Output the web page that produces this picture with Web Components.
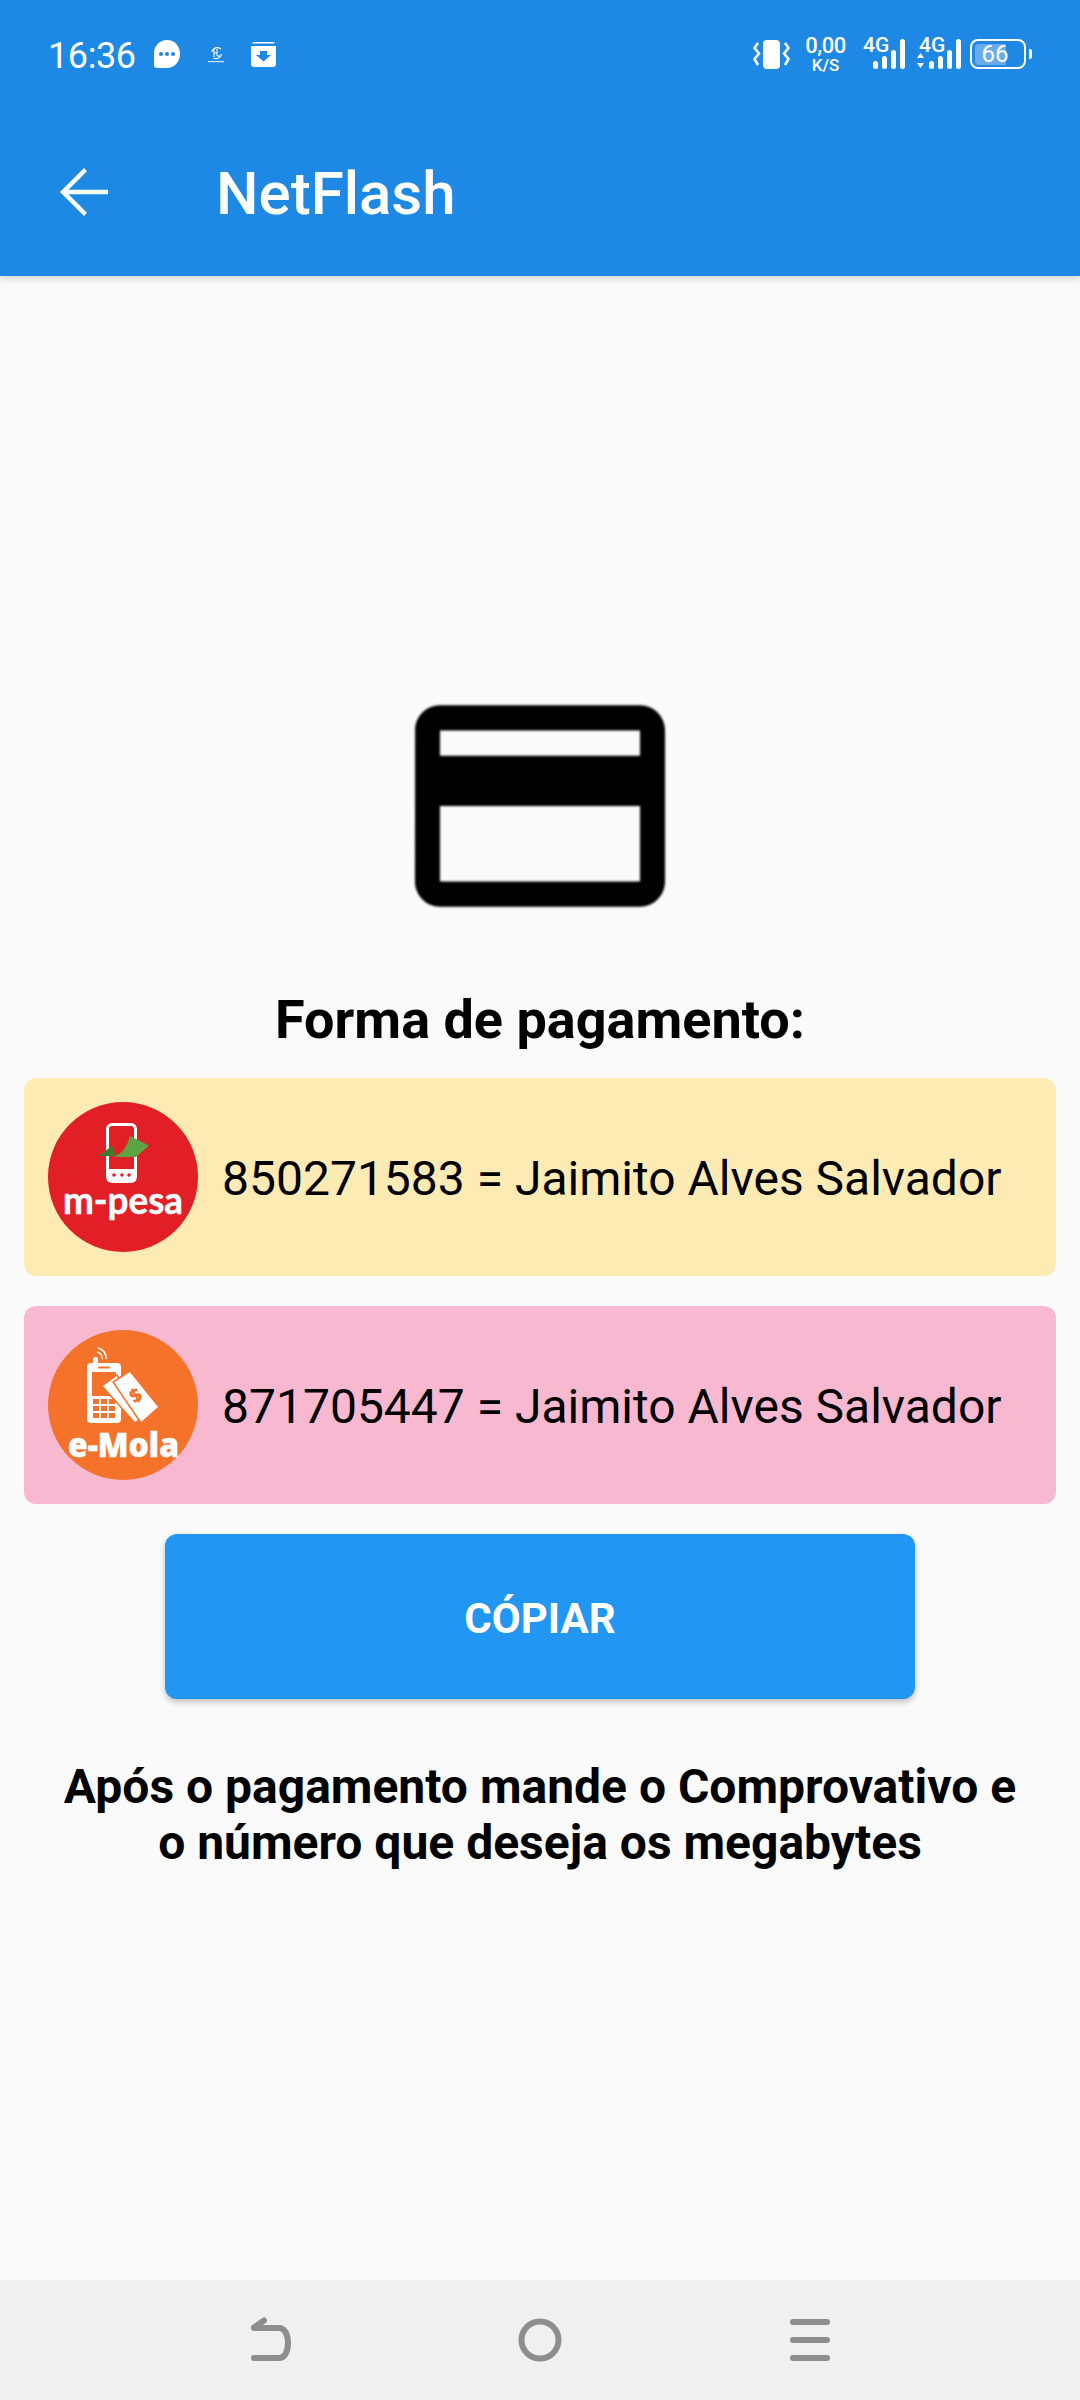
<!DOCTYPE html>
<html lang="pt"><head><meta charset="utf-8"><title>NetFlash</title>
<style>
html,body{margin:0;padding:0;background:#fafafa}
body{width:1080px;height:2400px;font-family:Roboto,"Noto Sans",sans-serif;color:#000;overflow:hidden}
app-screen{height:2400px}
</style></head><body>
<app-screen>
  <app-bar slot="top" title="NetFlash"></app-bar>
  <pay-icon></pay-icon>
  <h-title>Forma de pagamento:</h-title>
  <pay-card color="#feebb3"><mpesa-logo slot="logo"></mpesa-logo>850271583 = Jaimito Alves Salvador</pay-card>
  <pay-card color="#f8b9d0" class="second"><emola-logo slot="logo"></emola-logo>871705447 = Jaimito Alves Salvador</pay-card>
  <copy-button>CÓPIAR</copy-button>
  <note-text>Após o pagamento mande o Comprovativo e<br>o número que deseja os megabytes</note-text>
  <nav-bar slot="bottom"></nav-bar>
</app-screen>
<script>
function def(name, html, setup){
  customElements.define(name, class extends HTMLElement{
    constructor(){super();const r=this.attachShadow({mode:'open'});r.innerHTML=html;if(setup)setup(this,r);}
  });
}
def('app-screen',`<style>:host{display:flex;flex-direction:column;width:1080px;background:#fafafa}
main{flex:1;display:flex;flex-direction:column;align-items:center;padding-top:379px;min-height:0}</style>
<slot name="top"></slot><main><slot></slot></main><slot name="bottom"></slot>`);

def('status-bar',`<style>
:host{display:flex;align-items:center;height:108px;box-sizing:border-box;padding:0 48px 0 48px;color:#fff;font-family:Roboto,sans-serif}
.left,.right{display:flex;align-items:center}
.sp{flex:1}
.time{font-size:36px;line-height:48px;font-weight:400;width:88px;white-space:nowrap;letter-spacing:-.4px;margin-top:3px}
svg{display:block;flex:none}
.speed{display:flex;flex-direction:column;align-items:center;width:39px;margin:0 18px 0 16px;font-weight:500;color:#fff}
.speed b{font-weight:500;font-size:22px;line-height:21px;letter-spacing:-.5px}
.speed i{font-style:normal;font-size:17px;line-height:16px;margin-top:1px}
.g{font-size:21px;font-weight:500;line-height:20px;white-space:nowrap}
.net{display:flex;align-items:flex-start;position:relative;height:34px}
.net .g{width:24px;margin-top:-2px}
.bat{display:flex;align-items:center;margin-left:9px}
.batbox{box-sizing:border-box;width:56px;height:30px;border:2.5px solid #fff;border-radius:8px;padding:2.5px;display:flex}
.fill{width:31px;background:#6aabee;border-radius:3px 0 0 3px;height:100%;position:relative}
.pct{font-size:24px;line-height:20px;font-weight:400;width:100%;white-space:nowrap;padding-left:7px;box-sizing:border-box}
.nub{width:3px;height:10px;background:#fff;border-radius:0 2px 2px 0;margin-left:3px}
</style>
<div class="left">
  <span class="time">16:36</span>
  <svg width="26" height="28" viewBox="0 0 26 28" style="margin-left:18px"><path d="M13 0C5.800 0 0 5.600 0 13v12c0 1.700 1.100 3 3 3h10c7.200 0 13-6 13-14S20.200 0 13 0z" fill="#fff"/><circle cx="7" cy="14" r="2" fill="#1e88e5"/><circle cx="13" cy="14" r="2" fill="#1e88e5"/><circle cx="19" cy="14" r="2" fill="#1e88e5"/></svg>
  <svg width="18" height="18" viewBox="0 0 18 18" style="margin-left:27px"><path d="M5 7a5.500 5.500 0 0 1 9-3M14.500 9a5.500 5.500 0 0 1-8 4" fill="none" stroke="#fff" stroke-width="1.200"/><path d="M7 4v8M10 4v7h3M7 8h3" stroke="#fff" stroke-width="1" fill="none"/><rect x="1" y="16" width="16" height="1.200" fill="#fff" opacity=".8"/></svg>
  <svg width="25" height="25" viewBox="0 0 25 25" style="margin-left:26px"><path d="M3 0h19a3 3 0 0 1 2 1.500H1A3 3 0 0 1 3 0z" fill="#fff"/><path d="M0 4h25v18a3 3 0 0 1-3 3H3a3 3 0 0 1-3-3z" fill="#fff"/><path d="M9 9h7v4h4l-7.500 6.500L5 13h4z" fill="#1e88e5"/></svg>
</div>
<div class="sp"></div>
<div class="right">
  <svg width="37" height="29" viewBox="0 0 37 29"><rect x="10" y="0" width="17" height="29" rx="4" fill="#fff"/><path d="M5 3L1.500 8 6 13.500 1.500 19 5 25M32 3l3.500 5L31 13.500 35.500 19 32 25" fill="none" stroke="#fff" stroke-width="2.600"/></svg>
  <div class="speed"><b>0,00</b><i>K/S</i></div>
  <div class="net"><span class="g">4G</span>
    <svg width="34" height="32" viewBox="0 0 34 32" style="margin:2px 0 0 -14px"><rect x="0" y="22" width="5" height="8" rx="2.500" fill="#fff"/><rect x="9" y="17" width="5" height="13" rx="2.500" fill="#fff"/><rect x="18" y="11" width="5" height="19" rx="2.500" fill="#fff"/><rect x="27" y="0" width="5" height="30" rx="2.500" fill="#fff"/></svg>
  </div>
  <div class="net" style="margin-left:12px"><span class="g" style="margin-left:0">4G</span>
    <svg width="44" height="32" viewBox="0 0 44 32" style="margin:2px 0 0 -26px"><path d="M0 19l3.500-5 3.500 5zM0 24l3.500 5 3.500-5z" fill="#fff"/><rect x="12" y="22" width="5" height="8" rx="2.500" fill="#fff"/><rect x="21" y="17" width="5" height="13" rx="2.500" fill="#fff"/><rect x="30" y="11" width="5" height="19" rx="2.500" fill="#fff"/><rect x="39" y="0" width="5" height="30" rx="2.500" fill="#fff"/></svg>
  </div>
  <div class="bat"><div class="batbox"><div class="fill"><div class="pct">66</div></div></div><div class="nub"></div></div>
</div>`);

def('app-bar',`<style>
:host{display:block;background:#1e88e5;color:#fff;box-shadow:0 2px 8px rgba(0,0,0,.18);position:relative;z-index:1}
.tool{height:168px;display:flex;align-items:center;padding-left:60px;box-sizing:border-box}
svg{display:block;flex:none}
.t{font-size:60px;font-weight:500;line-height:70px;margin:4px 0 0 108px;white-space:nowrap}
</style><status-bar></status-bar>
<div class="tool"><svg width="48" height="48" viewBox="0 0 48 48"><path d="M48 21.800H8.500L27 3.200 24 0 0 24l24 24 3-3.200L8.500 26.200H48z" fill="#fff"/></svg><span class="t"></span></div>`,
(h,r)=>{queueMicrotask(()=>{r.querySelector('.t').textContent=h.getAttribute('title')||'NetFlash'});});

def('pay-icon',`<style>:host{display:block;width:300px;height:302px}svg{display:block;filter:blur(.9px)}</style>
<svg width="300" height="302" viewBox="0 0 24 24" preserveAspectRatio="none"><path d="M20 4H4c-1.110 0-1.990.890-1.990 2L2 18c0 1.110.890 2 2 2h16c1.110 0 2-.890 2-2V6c0-1.110-.890-2-2-2zm0 14H4v-6h16v6zm0-10H4V6h16v2z" fill="#000"/></svg>`);

def('h-title',`<style>:host{display:block;font-size:54px;font-weight:700;line-height:60px;margin:33px 0 28px;text-align:center;white-space:nowrap}</style><slot></slot>`);

def('pay-card',`<style>:host{display:flex;align-items:center;box-sizing:border-box;width:1032px;height:198px;padding:24px;border-radius:12px;margin-bottom:30px;font-size:48px;line-height:56px;white-space:nowrap}
.logo{width:150px;height:150px;margin-right:24px;flex:none}
.txt{padding-top:3px}</style>
<div class="logo"><slot name="logo"></slot></div><div class="txt"><slot></slot></div>`,
(h)=>{queueMicrotask(()=>{h.style.background=h.getAttribute('color')});});

def('mpesa-logo',`<style>:host{display:block;width:150px;height:150px}svg{display:block}text{font-family:Lato,sans-serif;font-weight:700}</style>
<svg width="150" height="150" viewBox="0 0 150 150"><circle cx="75" cy="75" r="75" fill="#e21f26"/>
<rect x="59.500" y="22.500" width="28" height="57" rx="4.500" fill="none" stroke="#fff" stroke-width="3"/>
<rect x="59" y="67" width="29" height="13" rx="3" fill="#fff"/>
<circle cx="66" cy="73" r="1.800" fill="#e21f26"/><circle cx="74" cy="73" r="1.800" fill="#e21f26"/><circle cx="81" cy="73" r="1.800" fill="#e21f26"/>
<path d="M50 54L64 44l4 10z" fill="#3f7a2e"/>
<path d="M65 55c9-3 14-10 17-21l19 9.500-13 11.500z" fill="#5da344"/>
<text x="15" y="112" font-size="38" textLength="120" lengthAdjust="spacingAndGlyphs" fill="#fff" stroke="#fff" stroke-width=".5">m-pesa</text></svg>`);

def('emola-logo',`<style>:host{display:block;width:150px;height:150px}svg{display:block}text{font-family:"Open Sans",sans-serif;font-weight:800}</style>
<svg width="150" height="150" viewBox="0 0 150 150"><circle cx="75" cy="75" r="75" fill="#f4722a"/>
<rect x="45" y="27" width="5" height="8" rx="2" fill="#fff"/>
<path d="M49 22a6 6 0 0 1 5 7M50 18a10 10 0 0 1 8 11" fill="none" stroke="#fff" stroke-width="1.600"/>
<rect x="39" y="33" width="34" height="60" rx="4" fill="#fff"/>
<rect x="44" y="42" width="24" height="24" fill="#f4722a"/>
<rect x="50" y="36.500" width="12" height="2" rx="1" fill="#f4722a"/>
<g fill="#f4722a"><rect x="45" y="69" width="6" height="5"/><rect x="53" y="69" width="6" height="5"/><rect x="61" y="69" width="6" height="5"/><rect x="45" y="76" width="6" height="5"/><rect x="53" y="76" width="6" height="5"/><rect x="61" y="76" width="6" height="5"/><rect x="45" y="83" width="6" height="5"/><rect x="53" y="83" width="6" height="5"/><rect x="61" y="83" width="6" height="5"/></g>
<path d="M69 45L54 56l33 37 4-3z" fill="#fff" stroke="#f4722a" stroke-width="1.500"/>
<path d="M82 41L65 52l28 41 18-16z" fill="#fff" stroke="#f4722a" stroke-width="1.500"/>
<text x="88" y="72" font-size="19" text-anchor="middle" transform="rotate(-30 88 66)" fill="#f4722a">$</text>
<text x="20" y="127" font-size="33" textLength="111" lengthAdjust="spacingAndGlyphs" fill="#fff" stroke="#fff" stroke-width=".5">e-Mola</text></svg>`);

def('copy-button',`<style>:host{display:flex;align-items:center;justify-content:center;box-sizing:border-box;width:750px;height:165px;padding-top:3px;background:#2196f3;color:#fff;border-radius:12px;font-size:42px;font-weight:700;box-shadow:0 3px 6px rgba(0,0,0,.24);white-space:nowrap}</style><slot></slot>`);

def('note-text',`<style>:host{display:block;font-size:48px;font-weight:700;line-height:56px;text-align:center;margin-top:60px;white-space:nowrap}</style><slot></slot>`);

def('nav-bar',`<style>:host{display:flex;align-items:center;justify-content:center;height:120px;background:#f0f0f0;flex:none}
.row{display:flex;align-items:center;gap:0}
svg{display:block}</style>
<div class="row">
<svg width="48" height="50" viewBox="0 0 48 50" style="margin-right:221px"><path d="M5 13h25c5.500 0 9 6 9 15s-3.500 15-9 15H5M5 12.500l10-7" fill="none" stroke="#8e8e8e" stroke-width="6" stroke-linecap="round" stroke-linejoin="round"/></svg>
<svg width="44" height="44" viewBox="0 0 44 44" style="margin-right:227px"><circle cx="22" cy="22" r="18.500" fill="none" stroke="#8e8e8e" stroke-width="6"/></svg>
<svg width="42" height="44" viewBox="0 0 42 44"><path d="M4 4h34M4 22h34M4 40h34" stroke="#8e8e8e" stroke-width="6" stroke-linecap="round"/></svg>
</div>`);
</script>
</body></html>
